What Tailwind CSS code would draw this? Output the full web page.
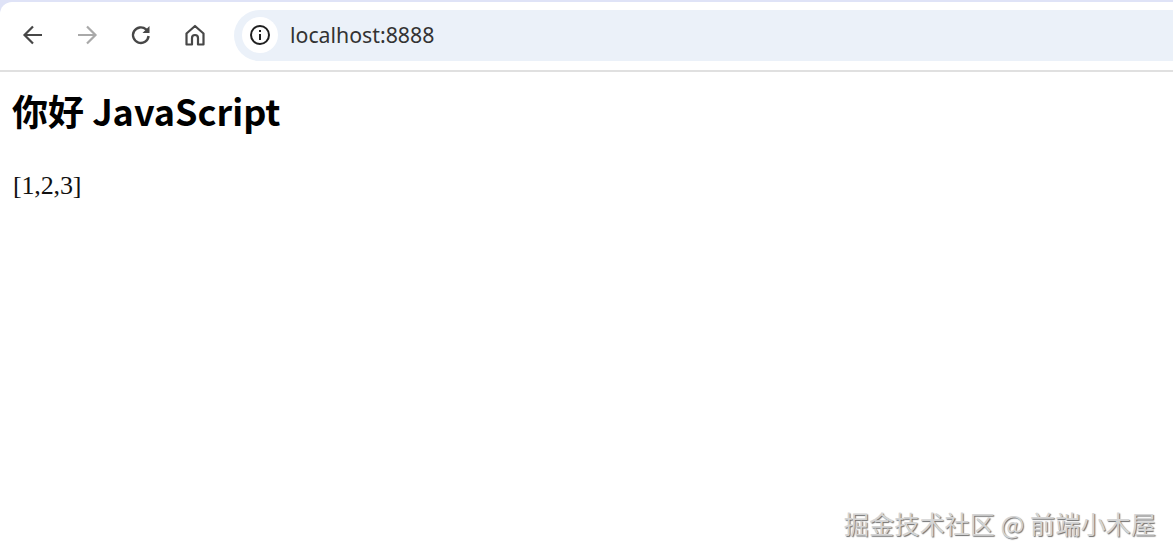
<!DOCTYPE html>
<html lang="zh">
<head>
  <meta charset="UTF-8" />
  <title>localhost:8888</title>
  <script src="https://cdn.jsdelivr.net/npm/@tailwindcss/browser@4"></script>
</head>
<body class="bg-white h-[556px] overflow-hidden relative">

  <!-- browser chrome -->
  <div class="bg-[#dfe3f7] pt-[2px]">
    <div class="bg-white rounded-tl-[12px] h-[68px] flex items-center pl-[15px] pb-[2px]">
      <div class="flex items-center gap-[18px]">
        <button class="w-[36px] h-[36px] flex items-center justify-center">
          <svg width="24" height="24" viewBox="0 0 24 24" fill="none" stroke="#474747" stroke-width="2.2"><path d="M21 12H4M12 3.5 3.500 12l8.500 8.500"/></svg>
        </button>
        <button class="w-[36px] h-[36px] flex items-center justify-center">
          <svg width="24" height="24" viewBox="0 0 24 24" fill="none" stroke="#a9a9a9" stroke-width="2.2"><path d="M3 12h17M12 3.5l8.500 8.500-8.500 8.500"/></svg>
        </button>
        <button class="w-[36px] h-[36px] flex items-center justify-center">
          <svg width="24" height="24" viewBox="0 0 24 24" fill="none"><path d="M19.6 13a7.8 7.8 0 1 1-2.5-6.6L19.5 8.6" stroke="#474747" stroke-width="2.4"/><path d="M20.5 3v7H13.5z" fill="#474747"/></svg>
        </button>
        <button class="w-[36px] h-[36px] flex items-center justify-center">
          <svg width="24" height="24" viewBox="0 0 24 24" fill="none" stroke="#474747" stroke-width="2.2" stroke-linejoin="round"><path d="M3.500 21.500V10.500L12 3l8.500 7.500v11h-5.500v-6.500a3 3 0 0 0-6 0v6.500z"/></svg>
        </button>
      </div>
      <div class="ml-[21px] flex-1 h-[51px] bg-[#ebf1f9] rounded-l-full flex items-center pl-[8px]">
        <div class="w-[36px] h-[36px] rounded-full bg-white flex items-center justify-center">
          <svg width="22" height="22" viewBox="0 0 22 22" fill="none" stroke="#1f1f1f" stroke-width="2"><circle cx="11" cy="11" r="9"/><path d="M11 10v6"/><path d="M11 6v2"/></svg>
        </div>
        <span class="ml-[12px] text-[21.3px] text-[#333] font-['Noto_Sans','Open_Sans',sans-serif]">localhost:8888</span>
      </div>
    </div>
    <div class="h-[2px] bg-[#e0e0e0]"></div>
  </div>

  <!-- page content -->
  <div class="px-[12px]">
    <h1 class="text-[36px] leading-[52px] mt-[12px] font-bold text-black font-['Noto_Sans_CJK_SC',sans-serif]">你好 JavaScript</h1>
    <p class="text-[26px] leading-[32px] mt-[34px] pl-[1px] tracking-[-0.15px] text-[#111] font-['Liberation_Serif',serif]">[1,2,3]</p>
  </div>

  <!-- watermark -->
  <div class="absolute right-[17px] bottom-[17px] text-[25.2px] leading-[32px] text-[#d4d4d4] [text-shadow:1px_1px_1px_#707070] font-['Noto_Sans_CJK_SC',sans-serif]">掘金技术社区 @ 前端小木屋</div>

</body>
</html>
